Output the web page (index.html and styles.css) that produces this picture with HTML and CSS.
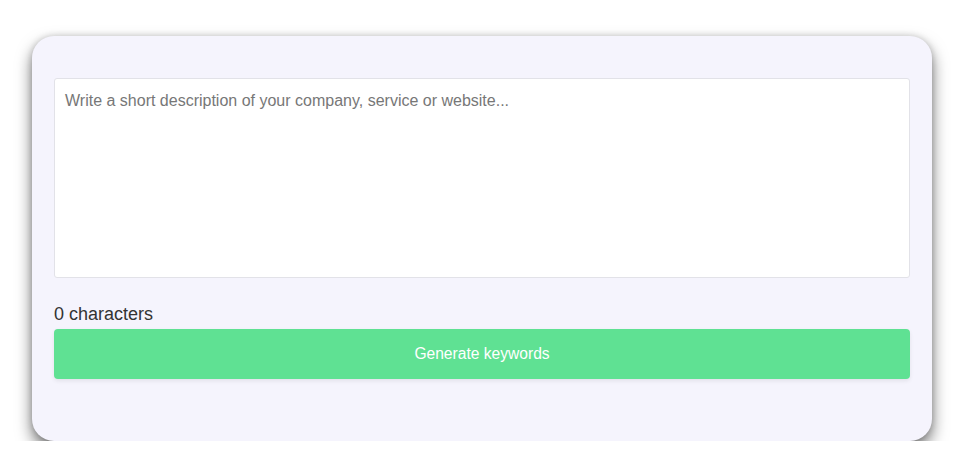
FILE: index.html
```html
<!DOCTYPE html>
<html lang="en">
<head>
<meta charset="utf-8">
<title>Keyword generator</title>
<link rel="stylesheet" href="styles.css">
</head>
<body>
<div class="page">
  <div class="card">
    <textarea class="desc" placeholder="Write a short description of your company, service or website..."></textarea>
    <div class="count">0 characters</div>
    <button class="generate">Generate keywords</button>
  </div>
</div>
</body>
</html>
```
FILE: styles.css
```css
html, body {
  margin: 0;
  padding: 0;
  background: #ffffff;
}
.page {
  padding: 36px 27px 0 32px;
}
.card {
  width: 856px;
  height: 363px;
  padding: 42px 22px 0 22px;
  background: #f5f4fd;
  border-radius: 22px;
  box-shadow: 0 8px 16px rgba(0, 0, 0, 0.55), 0 0 6px rgba(0, 0, 0, 0.15);
  font-family: "Liberation Sans", Arial, sans-serif;
}
.desc {
  display: block;
  box-sizing: border-box;
  width: 856px;
  height: 200px;
  margin: 0;
  padding: 12px 10px;
  border: 1px solid #e2e2e8;
  border-radius: 3px;
  background: #ffffff;
  font-family: "Liberation Sans", Arial, sans-serif;
  font-size: 16px;
  line-height: 20px;
  color: #333;
  resize: none;
  outline: none;
}
.desc::placeholder {
  color: #777777;
}
.count {
  margin-top: 26px;
  font-size: 18px;
  line-height: 20px;
  color: #333333;
}
.generate {
  display: block;
  width: 856px;
  height: 50px;
  margin-top: 5px;
  border: none;
  border-radius: 4px;
  background: #5fe193;
  color: #ffffff;
  font-family: "Liberation Sans", Arial, sans-serif;
  font-size: 15.6px;
  box-shadow: 0 2px 4px rgba(0, 0, 0, 0.08);
  cursor: pointer;
}
```
